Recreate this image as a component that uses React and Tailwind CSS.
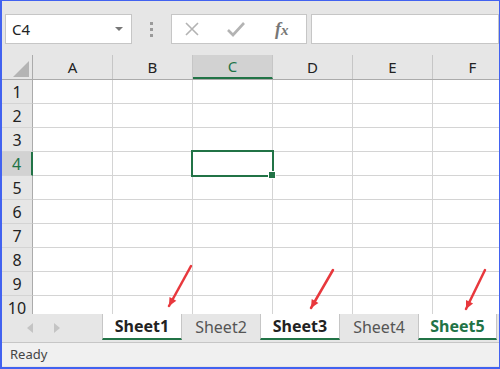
// App.jsx
// Excel-style sheet view — toolbar, grid, sheet tabs, status bar

const COLS = ['A', 'B', 'C', 'D', 'E', 'F']
const ROWS = [1, 2, 3, 4, 5, 6, 7, 8, 9, 10]

const TABS = [
  { name: 'Sheet1', active: true },
  { name: 'Sheet2' },
  { name: 'Sheet3', active: true },
  { name: 'Sheet4' },
  { name: 'Sheet5', active: true, green: true },
]

function Arrow({ x1, y1, x2, y2 }) {
  const ang = Math.atan2(y2 - y1, x2 - x1)
  const len = 9
  const a1 = ang + Math.PI - 0.45
  const a2 = ang + Math.PI + 0.45
  return (
    <g>
      <line x1={x1} y1={y1} x2={x2} y2={y2} stroke="#e8383d" strokeWidth="2.5" strokeLinecap="round" />
      <polygon
        points={`${x2},${y2} ${x2 + len * Math.cos(a1)},${y2 + len * Math.sin(a1)} ${x2 + len * Math.cos(a2)},${y2 + len * Math.sin(a2)}`}
        fill="#e8383d"
      />
    </g>
  )
}

export default function App() {
  return (
    <div
      className="relative w-[500px] h-[369px] overflow-hidden border-t border-r border-l-2 border-b-2 border-[#4262f0] bg-[#e6e6e6] text-[#222]"
      style={{ fontFamily: '"Noto Sans", "Open Sans", sans-serif' }}
    >
      {/* Formula bar */}
      <div className="h-[54px] flex items-start pt-[13px] bg-[#e6e6e6]">
        <div className="ml-[3px] w-[127px] h-[30px] bg-white border border-[#c6c6c6] flex items-center justify-between pl-[6px] pr-[8px]">
          <span className="text-[15px] text-[#222]">C4</span>
          <svg width="8" height="5" viewBox="0 0 8 5"><polygon points="0,0 8,0 4,4" fill="#777" /></svg>
        </div>
        <div className="w-[39px] h-[30px] flex flex-col items-center justify-center gap-[3px]">
          <div className="w-[3px] h-[3px] bg-[#9a9a9a]" />
          <div className="w-[3px] h-[3px] bg-[#9a9a9a]" />
          <div className="w-[3px] h-[3px] bg-[#9a9a9a]" />
        </div>
        <div className="w-[136px] h-[30px] bg-white border border-[#c6c6c6] flex items-center">
          <svg width="16" height="16" viewBox="0 0 16 16" className="ml-[12px]">
            <path d="M2 2 L14 14 M14 2 L2 14" stroke="#b3b3b3" strokeWidth="1.6" />
          </svg>
          <svg width="18" height="16" viewBox="0 0 18 16" className="ml-[27px]">
            <path d="M1 9 L6 14 L17 2" stroke="#b3b3b3" strokeWidth="2.6" fill="none" />
          </svg>
          <span className="ml-[30px] text-[18px] italic font-bold text-[#777]" style={{ fontFamily: '"Liberation Serif", serif' }}>
            f<span className="text-[15px]">x</span>
          </span>
        </div>
        <div className="ml-[4px] flex-1 h-[30px] bg-white border border-[#c6c6c6]" />
      </div>

      {/* Grid */}
      <div className="h-[259px] overflow-hidden bg-white">
        <div className="flex h-[25px] bg-[#e6e6e6] border-b border-[#ababab]">
          <div className="w-[31px] shrink-0 border-r border-[#ababab] flex items-end justify-end pr-[3px] pb-[2px]">
            <svg width="16" height="16" viewBox="0 0 16 16"><polygon points="16,0 16,16 0,16" fill="#b4b4b4" /></svg>
          </div>
          {COLS.map((c) => (
            <div
              key={c}
              className={`w-[80px] shrink-0 border-r border-[#c6c6c6] flex items-center justify-center text-[15px] ${
                c === 'C' ? 'bg-[#d2d2d2] text-[#217346] border-b-2 border-b-[#217346]' : 'text-[#222]'
              }`}
            >
              {c}
            </div>
          ))}
        </div>
        {ROWS.map((r) => (
          <div key={r} className="flex h-[24px]">
            <div
              className={`w-[31px] shrink-0 border-b border-[#d4d4d4] flex items-center justify-center text-[16px] ${
                r === 4
                  ? 'bg-[#d2d2d2] text-[#217346] border-r-2 border-r-[#217346]'
                  : 'bg-[#e6e6e6] border-r border-r-[#ababab] text-[#222]'
              }`}
            >
              {r}
            </div>
            {COLS.map((c) => (
              <div key={c} className="relative w-[80px] shrink-0 border-r border-b border-[#d4d4d4]">
                {r === 4 && c === 'C' && (
                  <>
                    <div className="absolute z-10 -left-[2px] -top-[2px] w-[83px] h-[27px] border-2 border-[#217346]" />
                    <div className="absolute z-20 left-[75px] top-[19px] w-[8px] h-[8px] bg-[#217346] border border-white" />
                  </>
                )}
              </div>
            ))}
          </div>
        ))}
      </div>

      {/* Sheet tabs */}
      <div className="h-[29px] flex bg-[#e6e6e6] border-b border-[#c6c6c6]">
        <div className="w-[100px] flex items-center pl-[25px] gap-[21px]">
          <svg width="6" height="10" viewBox="0 0 6 10"><polygon points="6,0 6,10 0,5" fill="#c4c4c4" /></svg>
          <svg width="6" height="10" viewBox="0 0 6 10"><polygon points="0,0 0,10 6,5" fill="#c4c4c4" /></svg>
        </div>
        <div className="flex h-[26px]">
          {TABS.map((t, i) => (
            <div
              key={t.name}
              className={`${i === 4 ? 'w-[79px]' : i % 2 === 0 ? 'w-[80px]' : 'w-[78px]'} flex items-center justify-center text-[16px] ${
                t.active
                  ? `bg-white font-bold border-l border-r border-[#c6c6c6] border-b-2 border-b-[#217346] ${t.green ? 'text-[#217346]' : 'text-[#222]'}`
                  : 'text-[#555]'
              }`}
            >
              {t.name}
            </div>
          ))}
        </div>
      </div>

      {/* Status bar */}
      <div className="h-[23px] bg-[#f0f0f0] flex items-center pl-[8px] text-[13px] text-[#444]">Ready</div>

      {/* Annotation arrows */}
      <svg className="absolute left-0 top-0 pointer-events-none" width="500" height="369" viewBox="0 0 500 369" style={{ marginLeft: -2, marginTop: -1 }}>
        <Arrow x1={191} y1={266} x2={169} y2={306} />
        <Arrow x1={333} y1={270} x2={311} y2={308} />
        <Arrow x1={485} y1={270} x2={466} y2={309} />
      </svg>
    </div>
  )
}
